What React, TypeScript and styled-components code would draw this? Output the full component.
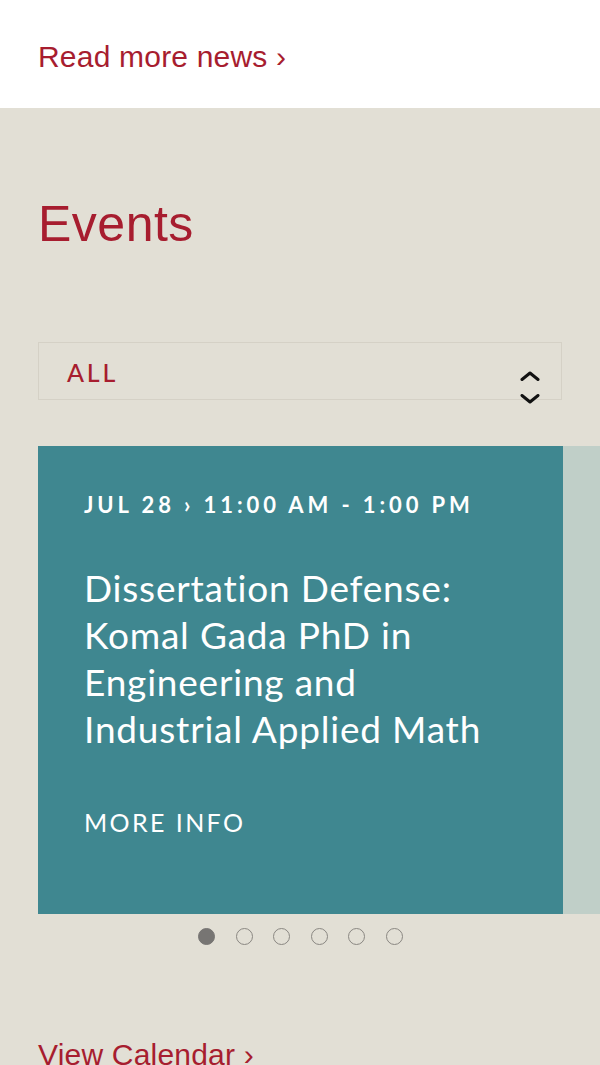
import React from 'react';
import styled, { createGlobalStyle } from 'styled-components';

const GlobalStyle = createGlobalStyle`
  html, body {
    margin: 0;
    padding: 0;
    background: #e2dfd5;
  }
  body {
    font-family: "Liberation Sans", Arial, sans-serif;
    overflow: hidden;
  }
`;

const red = '#a71d2f';

const NewsFooter = styled.div`
  background: #ffffff;
  height: 108px;
  padding: 40px 0 0 38px;
  box-sizing: border-box;
`;

const TextLink = styled.a`
  display: inline-block;
  color: ${red};
  font-family: "Liberation Sans", Arial, sans-serif;
  font-size: 30px;
  line-height: 34px;
  letter-spacing: 0.2px;
  text-decoration: none;
`;

const EventsSection = styled.section`
  background: #e2dfd5;
  padding: 86px 0 0 38px;
`;

const Heading = styled.h2`
  margin: 0;
  color: ${red};
  font-family: "Liberation Sans", Arial, sans-serif;
  font-weight: 400;
  font-size: 50px;
  line-height: 60px;
  letter-spacing: 0.5px;
`;

const Select = styled.div`
  margin-top: 88px;
  width: 524px;
  height: 58px;
  box-sizing: border-box;
  border: 1px solid #d5d1c6;
  display: flex;
  align-items: flex-start;
  justify-content: space-between;
  padding: 0 20px 0 28px;
`;

const SelectLabel = styled.span`
  color: ${red};
  font-family: "Lato", sans-serif;
  font-weight: 500;
  font-size: 25px;
  line-height: 24px;
  margin-top: 17px;
  letter-spacing: 2.8px;
`;

const Arrows = styled.div`
  display: flex;
  flex-direction: column;
  gap: 13px;
  margin-top: 28px;
  height: 33px;
`;

const Track = styled.div`
  margin-top: 46px;
  display: flex;
  overflow: hidden;
`;

const Card = styled.div<{ $faded?: boolean }>`
  flex: 0 0 525px;
  height: 468px;
  box-sizing: border-box;
  padding: 46px 46px 0 46px;
  background: ${(p) => (p.$faded ? '#c0cfc8' : '#3f8790')};
  color: #ffffff;
  font-family: "Lato", sans-serif;
`;

const DateLine = styled.div`
  font-size: 22px;
  line-height: 26px;
  font-weight: 700;
  letter-spacing: 3.9px;
`;

const Title = styled.h3`
  margin: 46px 0 0 0;
  font-weight: 400;
  font-size: 37px;
  line-height: 47px;
  letter-spacing: 0.8px;
`;

const MoreInfo = styled.a`
  display: block;
  margin-top: 56px;
  color: #ffffff;
  font-size: 25px;
  line-height: 28px;
  letter-spacing: 2.4px;
  text-decoration: none;
`;

const Dots = styled.div`
  display: flex;
  justify-content: center;
  gap: 20.5px;
  width: 525px;
  margin-top: 14px;
`;

const Dot = styled.span<{ $active?: boolean }>`
  width: 17px;
  height: 17px;
  box-sizing: border-box;
  border-radius: 50%;
  border: 1.5px solid ${(p) => (p.$active ? '#777573' : '#8a8782')};
  background: ${(p) => (p.$active ? '#777573' : 'transparent')};
`;

const CalendarLink = styled(TextLink)`
  margin-top: 93px;
`;

const Chevron = ({ up }: { up?: boolean }) => (
  <svg width="22" height="10" viewBox="0 0 22 10">
    <path
      d={up ? 'M3 8.5 L11 2 L19 8.5' : 'M3 1.5 L11 8 L19 1.5'}
      fill="none"
      stroke="#111"
      strokeWidth="3"
      strokeLinecap="round"
      strokeLinejoin="round"
    />
  </svg>
);

export default function App() {
  return (
    <>
      <GlobalStyle />
      <NewsFooter>
        <TextLink href="#">Read more news ›</TextLink>
      </NewsFooter>
      <EventsSection>
        <Heading>Events</Heading>
        <Select>
          <SelectLabel>ALL</SelectLabel>
          <Arrows>
            <Chevron up />
            <Chevron />
          </Arrows>
        </Select>
        <Track>
          <Card>
            <DateLine>JUL 28 › 11:00 AM - 1:00 PM</DateLine>
            <Title>
              Dissertation Defense: Komal Gada PhD in Engineering and Industrial Applied Math
            </Title>
            <MoreInfo href="#">MORE INFO</MoreInfo>
          </Card>
          <Card $faded />
        </Track>
        <Dots>
          {[0, 1, 2, 3, 4, 5].map((i) => (
            <Dot key={i} $active={i === 0} />
          ))}
        </Dots>
        <CalendarLink href="#">View Calendar ›</CalendarLink>
      </EventsSection>
    </>
  );
}
